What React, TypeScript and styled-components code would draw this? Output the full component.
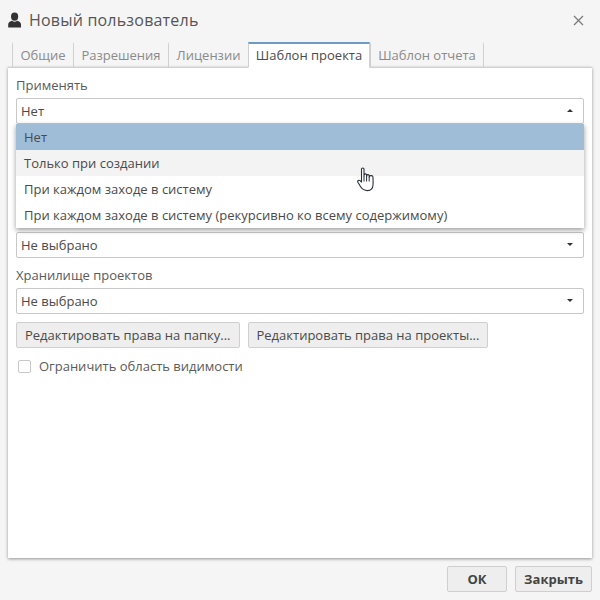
import styled, { createGlobalStyle } from 'styled-components';

const GlobalStyle = createGlobalStyle`
    html, body {
        margin: 0;
        padding: 0;
        background: #f5f5f5;
    }
    * {
        box-sizing: border-box;
    }
`;

const TABS = [
    { label: 'Общие', width: 61 },
    { label: 'Разрешения', width: 95 },
    { label: 'Лицензии', width: 80 },
    { label: 'Шаблон проекта', width: 122, active: true },
    { label: 'Шаблон отчета', width: 114 },
];

const OPTIONS = [
    { label: 'Нет', state: 'selected' },
    { label: 'Только при создании', state: 'hover' },
    { label: 'При каждом заходе в систему' },
    { label: 'При каждом заходе в систему (рекурсивно ко всему содержимому)' },
];

const UserIcon = () => (
    <svg width="14" height="16" viewBox="0 0 14 16">
        <ellipse cx="6.6" cy="4.6" rx="3.6" ry="4.2" fill="#333" />
        <path d="M0.2 15.4 V12.4 C0.2 10.4 2.2 9.4 4 8.8 C5.4 10 7.8 10 9.2 8.8 C11 9.4 13 10.4 13 12.4 V15.4 Z" fill="#333" />
    </svg>
);

const CloseIcon = () => (
    <svg width="11" height="11" viewBox="0 0 11 11">
        <path d="M1 1 L10 10 M10 1 L1 10" stroke="#7a7a7a" strokeWidth="1.3" fill="none" />
    </svg>
);

const HandCursor = () => (
    <svg width="18" height="25" viewBox="0 0 18 25">
        <path
            d="M4.5 2 C4.5 0.6 7 0.6 7 2 V9 L7.2 7.8 C7.4 6.6 9.4 6.6 9.6 7.9 V9.6 L9.9 8.4 C10.2 7.3 12 7.4 12.2 8.6 V10.2 L12.6 9.2 C13 8.2 15.8 8.5 15.9 9.8 C16.1 12.5 16.2 15.5 16 18 C15.8 21 14 23.6 10.6 23.6 C7 23.6 5 22 3.6 19.8 C2.6 18.2 1.6 16.4 0.9 15.2 C0.2 13.9 1.7 12.6 3 13.6 L4.5 15 Z"
            fill="#fff"
            stroke="#26303a"
            strokeWidth="1.1"
            strokeLinejoin="round"
        />
        <path d="M7 9 V14.5 M9.6 9.6 V14.5 M12.2 10.2 V14.5" stroke="#26303a" strokeWidth="1" fill="none" />
    </svg>
);

const App = () => {
    return (
        <>
            <GlobalStyle />
            <Dialog>
                <Header>
                    <Title>
                        <UserIcon />
                        Новый пользователь
                    </Title>
                    <CloseButton>
                        <CloseIcon />
                    </CloseButton>
                </Header>

                <TabBar>
                    {TABS.map(({ label, width, active }) => (
                        <Tab key={label} $width={width} $active={active}>
                            {label}
                        </Tab>
                    ))}
                </TabBar>

                <Panel>
                    <Label>Применять</Label>
                    <SelectWrapper>
                        <Select>
                            Нет
                            <Caret $up />
                        </Select>
                        <OptionList>
                            {OPTIONS.map(({ label, state }) => (
                                <Option key={label} $state={state}>
                                    {label}
                                </Option>
                            ))}
                        </OptionList>
                        <CursorSpot>
                            <HandCursor />
                        </CursorSpot>
                    </SelectWrapper>

                    <Select $covered>
                        Не выбрано
                        <Caret />
                    </Select>

                    <Label $spaced>Хранилище проектов</Label>
                    <Select>
                        Не выбрано
                        <Caret />
                    </Select>

                    <ButtonRow>
                        <GrayButton>Редактировать права на папку...</GrayButton>
                        <GrayButton>Редактировать права на проекты...</GrayButton>
                    </ButtonRow>

                    <CheckRow>
                        <CheckBox />
                        Ограничить область видимости
                    </CheckRow>
                </Panel>

                <Footer>
                    <FooterButton $width={60}>ОК</FooterButton>
                    <FooterButton $width={77}>Закрыть</FooterButton>
                </Footer>
            </Dialog>
        </>
    );
};

export default App;

const Dialog = styled.div`
    display: flex;
    flex-direction: column;
    width: 600px;
    height: 600px;
    padding: 0 8px;
    background-color: #f5f5f5;
    font-family: 'Open Sans', sans-serif;
    font-size: 13px;
    color: #4a4a4a;
    overflow: hidden;
`;

const Header = styled.div`
    display: flex;
    align-items: center;
    justify-content: space-between;
    height: 42px;
    padding-right: 2px;
    padding-bottom: 2px;
`;

const Title = styled.div`
    display: flex;
    align-items: center;
    gap: 7px;
    font-size: 16px;
    letter-spacing: 0.2px;
    color: #555;
`;

const CloseButton = styled.div`
    display: flex;
    align-items: center;
    justify-content: center;
    width: 13px;
    height: 13px;
    margin-right: 5px;
`;

const TabBar = styled.div`
    position: relative;
    z-index: 1;
    display: flex;
    height: 26px;
    padding-left: 4px;
    margin-bottom: -1px;
    line-height: 1;
`;

const Tab = styled.div<{ $width: number; $active?: boolean }>`
    display: flex;
    align-items: center;
    justify-content: center;
    width: ${({ $width }) => $width}px;
    height: 26px;
    color: ${({ $active }) => ($active ? '#4a4a4a' : '#8a8a8a')};
    background-color: ${({ $active }) => ($active ? '#fff' : 'transparent')};
    border-top: 2px solid ${({ $active }) => ($active ? '#6d9bc3' : 'transparent')};
    border-left: 1px solid #d0d0d0;
    border-right: ${({ $active }) => ($active ? '1px solid #d0d0d0' : 'none')};
    border-bottom: 1px solid ${({ $active }) => ($active ? '#fff' : 'transparent')};

    &:last-child {
        border-right: 1px solid #d0d0d0;
    }
`;

const Panel = styled.div`
    flex: 1;
    display: flex;
    flex-direction: column;
    padding: 8px 8px 0;
    background-color: #fff;
    border-top: 1px solid #cfcfcf;
    box-shadow: 0 1px 3px rgba(0, 0, 0, 0.4);
`;

const Label = styled.div<{ $spaced?: boolean }>`
    height: 22px;
    line-height: 18px;
    margin-top: ${({ $spaced }) => ($spaced ? '8px' : '0')};
    color: #5a5a5a;
`;

const SelectWrapper = styled.div`
    position: relative;
`;

const Select = styled.div<{ $covered?: boolean }>`
    position: relative;
    display: flex;
    align-items: center;
    height: 26px;
    margin-top: ${({ $covered }) => ($covered ? '108px' : '0')};
    padding-left: 4px;
    background-color: #fff;
    border: 1px solid #c8c8c8;
    border-radius: 2px;
    color: #4a4a4a;
`;

const Caret = styled.span<{ $up?: boolean }>`
    position: absolute;
    top: 10px;
    right: 10px;
    width: 0;
    height: 0;
    border-left: 3.5px solid transparent;
    border-right: 3.5px solid transparent;
    border-top: ${({ $up }) => ($up ? 'none' : '3.5px solid #333')};
    border-bottom: ${({ $up }) => ($up ? '3.5px solid #333' : 'none')};
`;

const OptionList = styled.div`
    position: absolute;
    top: 26px;
    left: 0;
    right: 0;
    z-index: 5;
    background-color: #fff;
    box-shadow: 0 2px 5px rgba(0, 0, 0, 0.4);
`;

const Option = styled.div<{ $state?: string }>`
    display: flex;
    align-items: center;
    height: 26px;
    padding-left: 8px;
    color: #4a4a4a;
    background-color: ${({ $state }) =>
        $state === 'selected' ? '#a0bdd8' : $state === 'hover' ? '#f3f3f3' : '#fff'};
`;

const CursorSpot = styled.div`
    position: absolute;
    top: 69px;
    left: 341px;
    z-index: 6;
    line-height: 0;
`;

const ButtonRow = styled.div`
    display: flex;
    gap: 8px;
    margin-top: 8px;
`;

const GrayButton = styled.div`
    display: flex;
    align-items: center;
    height: 26px;
    padding: 0 8px;
    background-color: #eeeeee;
    border: 1px solid #cfcfcf;
    border-radius: 2px;
    color: #4a4a4a;
`;

const CheckRow = styled.div`
    display: flex;
    align-items: center;
    gap: 8px;
    margin-top: 9px;
    padding-left: 2px;
    color: #5a5a5a;
`;

const CheckBox = styled.span`
    width: 13px;
    height: 13px;
    background-color: #fff;
    border: 1px solid #c8c8c8;
    border-radius: 2px;
`;

const Footer = styled.div`
    display: flex;
    justify-content: flex-end;
    gap: 8px;
    height: 42px;
    padding-top: 8px;
`;

const FooterButton = styled.div<{ $width: number }>`
    display: flex;
    align-items: center;
    justify-content: center;
    width: ${({ $width }) => $width}px;
    height: 26px;
    background-color: #eeeeee;
    border: 1px solid #cfcfcf;
    border-radius: 2px;
    font-weight: 700;
    color: #444;
`;
